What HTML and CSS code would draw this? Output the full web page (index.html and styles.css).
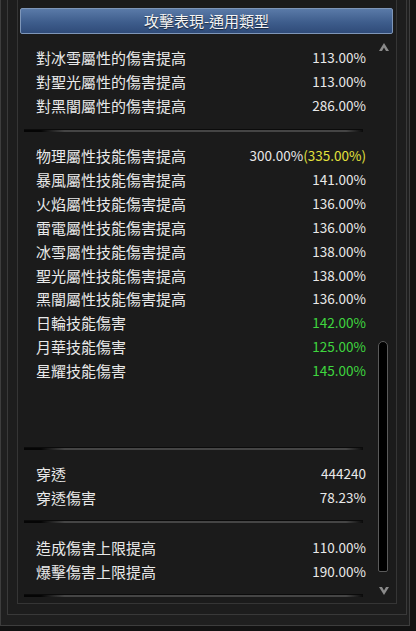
FILE: index.html
```
<!DOCTYPE html>
<html lang="zh-Hant">
<head>
    <meta charset="UTF-8">
    <meta name="viewport" content="width=device-width, initial-scale=1.0">
    <title>攻擊表現</title>
    <link rel="stylesheet" href="styles.css">
</head>
<body>
    <div class="frame-outer">
        <div class="frame-middle">
            <div class="panel">
                <div class="panel-title">攻擊表現-通用類型</div>

                <div class="stat-list">
                    <div class="row"><span>對冰雪屬性的傷害提高</span><span class="num">113.00%</span></div>
                    <div class="row"><span>對聖光屬性的傷害提高</span><span class="num">113.00%</span></div>
                    <div class="row"><span>對黑闇屬性的傷害提高</span><span class="num">286.00%</span></div>

                    <div class="divider"></div>

                    <div class="row"><span>物理屬性技能傷害提高</span><span class="num">300.00%<em class="bonus">(335.00%)</em></span></div>
                    <div class="row"><span>暴風屬性技能傷害提高</span><span class="num">141.00%</span></div>
                    <div class="row"><span>火焰屬性技能傷害提高</span><span class="num">136.00%</span></div>
                    <div class="row"><span>雷電屬性技能傷害提高</span><span class="num">136.00%</span></div>
                    <div class="row"><span>冰雪屬性技能傷害提高</span><span class="num">138.00%</span></div>
                    <div class="row"><span>聖光屬性技能傷害提高</span><span class="num">138.00%</span></div>
                    <div class="row"><span>黑闇屬性技能傷害提高</span><span class="num">136.00%</span></div>
                    <div class="row"><span>日輪技能傷害</span><span class="num up">142.00%</span></div>
                    <div class="row"><span>月華技能傷害</span><span class="num up">125.00%</span></div>
                    <div class="row"><span>星耀技能傷害</span><span class="num up">145.00%</span></div>

                    <div class="divider divider-far"></div>

                    <div class="row"><span>穿透</span><span class="num">444240</span></div>
                    <div class="row"><span>穿透傷害</span><span class="num">78.23%</span></div>

                    <div class="divider"></div>

                    <div class="row"><span>造成傷害上限提高</span><span class="num">110.00%</span></div>
                    <div class="row"><span>爆擊傷害上限提高</span><span class="num">190.00%</span></div>

                    <div class="divider"></div>
                </div>

                <!-- scrollbar -->
                <div class="scroll-up">
                    <svg width="12" height="10" viewBox="0 0 12 10"><path d="M6 1 L11 9 L8 9 L6 5.5 L4 9 L1 9 Z" fill="#8a8a8a"/></svg>
                </div>
                <div class="scroll-thumb"></div>
                <div class="scroll-down">
                    <svg width="12" height="10" viewBox="0 0 12 10"><path d="M6 9 L11 1 L8 1 L6 4.5 L4 1 L1 1 Z" fill="#8a8a8a"/></svg>
                </div>
            </div>
        </div>
    </div>
</body>
</html>
```

FILE: styles.css
```
body {
    margin: 0;
    width: 416px;
    height: 631px;
    overflow: hidden;
    background-color: #121212;
    font-family: "Noto Sans CJK TC", "Noto Sans", sans-serif;
    color: #e9e9e9;
}
.frame-outer {
    width: 410px;
    height: 626px;
    border: 1px solid #3d3d3d;
    border-top: none;
    background-color: #1f1f1f;
    padding: 0 0 0 6px;
    box-sizing: border-box;
}
.frame-middle {
    width: 400px;
    height: 615px;
    border: 1px solid #393939;
    border-top: none;
    background-color: #1d1d1d;
    padding: 0 0 0 9px;
    box-sizing: border-box;
}
.panel {
    position: relative;
    width: 380px;
    height: 604px;
    border: 1px solid #353535;
    border-top: none;
    background-color: #1b1b1b;
    box-sizing: border-box;
    padding: 8px 3px 0 2px;
}
.panel-title {
    height: 26px;
    box-sizing: border-box;
    border: 1px solid #7e96b8;
    border-radius: 2px;
    background: linear-gradient(#5a7aa8, #3e5d8c 55%, #2f4b79);
    color: #f4f4f4;
    font-size: 15px;
    line-height: 24px;
    text-align: center;
    text-shadow: 0 1px 1px rgba(0,0,0,0.6);
}
.stat-list {
    padding: 12px 27px 0 16px;
}
.row {
    display: flex;
    justify-content: space-between;
    align-items: center;
    height: 23.9px;
    font-size: 15px;
    line-height: 23px;
}
.num {
    font-size: 13.5px;
}
.bonus {
    font-style: normal;
    color: #e3e23c;
}
.up {
    color: #3fd63f;
}
.divider {
    height: 2px;
    margin: 11px 3px 12px -12px;
    background: linear-gradient(to right, #050505 0, #050505 5%, #454545 12%, #454545 95%, #0a0a0a 100%);
    border-top: 1px solid #0b0b0b;
}
.divider-far {
    margin-top: 64px;
}
.scroll-up,
.scroll-down {
    position: absolute;
    left: 360px;
    width: 12px;
    height: 10px;
    display: flex;
}
.scroll-up {
    top: 42px;
}
.scroll-down {
    top: 586px;
}
.scroll-thumb {
    position: absolute;
    left: 360px;
    top: 341px;
    width: 8px;
    height: 229px;
    background-color: #000;
    border: 1px solid #5a5a5a;
    border-radius: 5px 5px 2px 2px;
}
```
